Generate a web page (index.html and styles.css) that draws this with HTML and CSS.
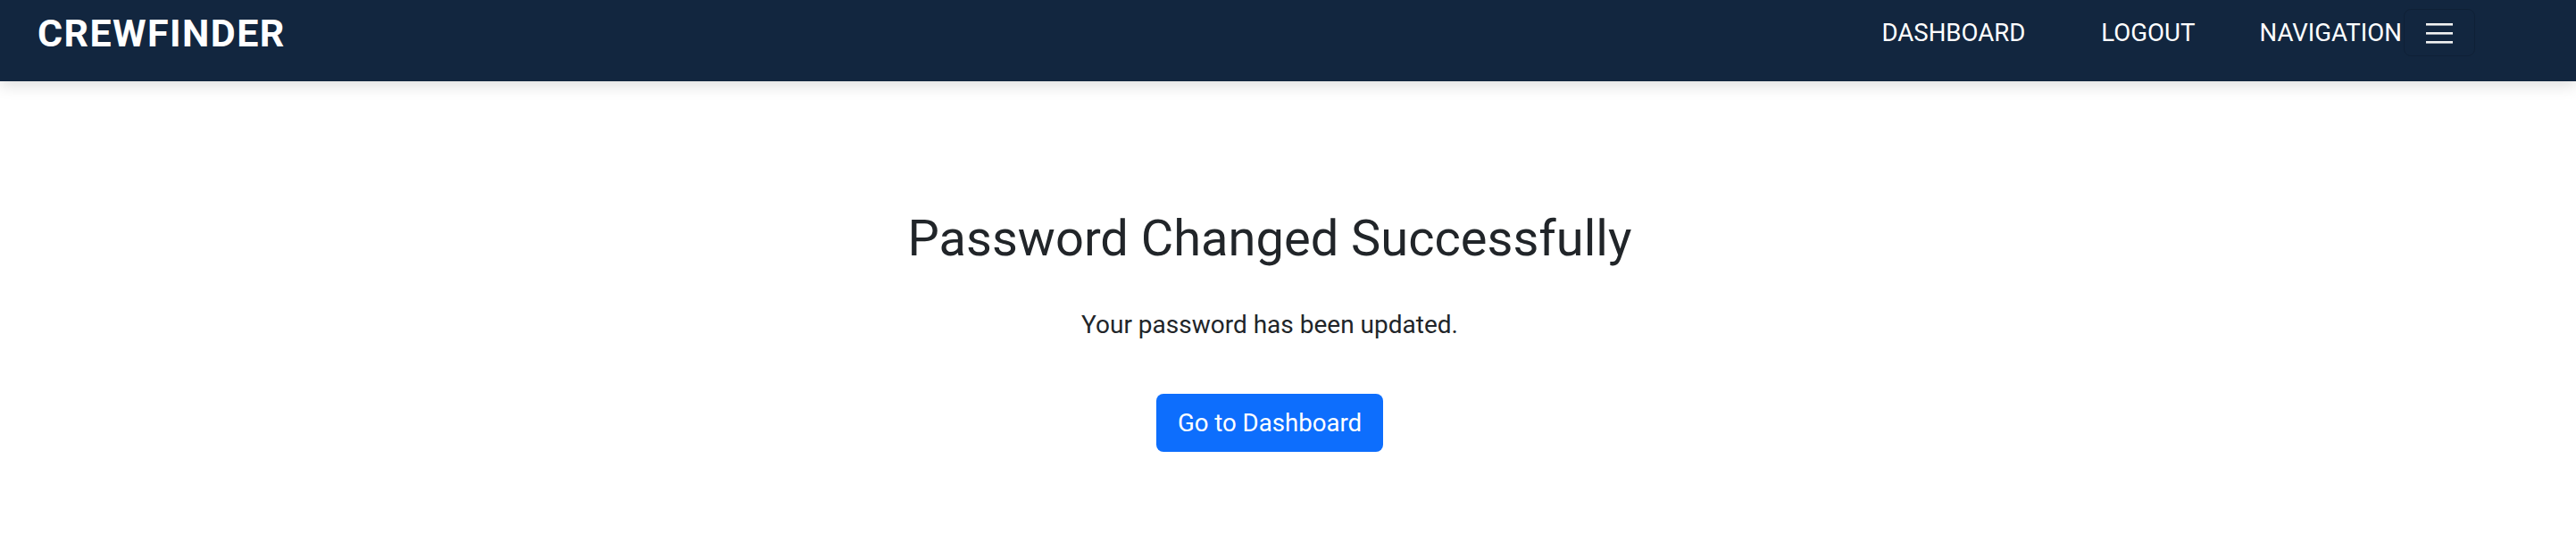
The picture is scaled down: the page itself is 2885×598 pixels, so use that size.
FILE: index.html
```html
<!DOCTYPE html>
<html lang="en">
<head>
<meta charset="utf-8">
<title>CrewFinder - Password Changed</title>
<link rel="stylesheet" href="styles.css">
</head>
<body>
<nav class="navbar">
  <div class="navbar-row">
    <a class="brand" href="#">CREWFINDER</a>
    <div class="nav-right">
      <a class="nav-link nav-dashboard" href="#">DASHBOARD</a>
      <a class="nav-link nav-logout" href="#">LOGOUT</a>
      <span class="nav-link nav-navigation">NAVIGATION</span>
      <button class="toggler" type="button" aria-label="Toggle navigation">
        <svg width="30" height="24" viewBox="0 0 30 24" aria-hidden="true">
          <rect x="0" y="1" width="30" height="2.6" fill="#f2f2f2"/>
          <rect x="0" y="11" width="30" height="2.6" fill="#f2f2f2"/>
          <rect x="0" y="21" width="30" height="2.6" fill="#f2f2f2"/>
        </svg>
      </button>
    </div>
  </div>
</nav>
<main class="content">
  <h2 class="title">Password Changed Successfully</h2>
  <p class="message">Your password has been updated.</p>
  <a class="btn-primary" href="#">Go to Dashboard</a>
</main>
</body>
</html>
```
FILE: styles.css
```css
* { box-sizing: border-box; }
html, body {
  margin: 0;
  padding: 0;
  background: #ffffff;
  font-family: Roboto, "Liberation Sans", Arial, sans-serif;
  color: #212529;
}
a { text-decoration: none; }

.navbar {
  background: #12263f;
  height: 91px;
  box-shadow: 0 5px 16px rgba(0, 0, 0, 0.13);
  position: relative;
  z-index: 1;
}
.navbar-row {
  height: 73px;
  display: flex;
  align-items: center;
  justify-content: space-between;
  padding: 0 113px 0 42px;
}
.brand {
  color: #ffffff;
  font-weight: 700;
  font-size: 43px;
  line-height: 50px;
  letter-spacing: 1.4px;
}
.nav-right {
  display: flex;
  align-items: center;
}
.nav-link {
  color: #ffffff;
  font-size: 27.6px;
  line-height: 42px;
  font-weight: 400;
}
.nav-logout { margin-left: 85px; }
.nav-navigation { margin-left: 72px; }
.toggler {
  margin-left: 2px;
  width: 80px;
  height: 53px;
  background: transparent;
  border: 1px solid rgba(0, 0, 0, 0.14);
  border-radius: 8px;
  display: flex;
  align-items: center;
  justify-content: center;
  padding: 0;
}
.toggler svg { display: block; }

.content {
  display: flex;
  flex-direction: column;
  align-items: center;
  padding: 143px 41px 0 0;
}
.title {
  margin: 0;
  font-size: 56px;
  font-weight: 400;
  line-height: 1.2;
  color: #212529;
}
.message {
  margin: 42.2px 0 0 0;
  font-size: 28px;
  line-height: 1.5;
  color: #212529;
}
.btn-primary {
  margin-top: 55.6px;
  background: #0d6efd;
  color: #ffffff;
  font-size: 27.6px;
  line-height: 41.4px;
  padding: 11.8px 23.5px;
  border-radius: 8px;
}
```
